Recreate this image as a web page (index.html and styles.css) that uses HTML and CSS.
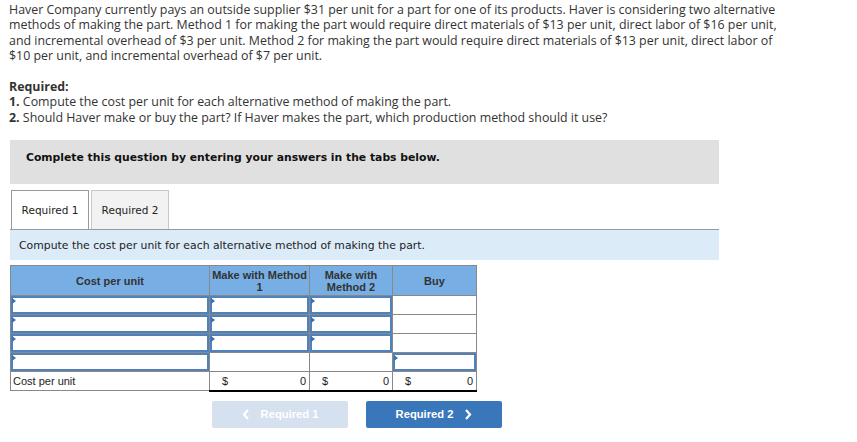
FILE: index.html
```html
<!DOCTYPE html>
<html>
<head>
<meta charset="utf-8">
<link rel="stylesheet" href="styles.css">
</head>
<body>
<div class="page">
  <p class="intro">Haver Company currently pays an outside supplier $31 per unit for a part for one of its products. Haver is considering two alternative<br>methods of making the part. Method 1 for making the part would require direct materials of $13 per unit, direct labor of $16 per unit,<br>and incremental overhead of $3 per unit. Method 2 for making the part would require direct materials of $13 per unit, direct labor of<br>$10 per unit, and incremental overhead of $7 per unit.</p>
  <div class="required">
    <div class="req-title">Required:</div>
    <div><b>1.</b> Compute the cost per unit for each alternative method of making the part.</div>
    <div><b>2.</b> Should Haver make or buy the part? If Haver makes the part, which production method should it use?</div>
  </div>
  <div class="banner">Complete this question by entering your answers in the tabs below.</div>
  <div class="tabs">
    <div class="tab active">Required 1</div>
    <div class="tab">Required 2</div>
  </div>
  <div class="instr">Compute the cost per unit for each alternative method of making the part.</div>
  <table class="grid">
    <colgroup><col class="c1"><col class="c2"><col class="c3"><col class="c4"></colgroup>
    <thead>
      <tr><th>Cost per unit</th><th class="top">Make with Method 1</th><th class="top">Make with Method 2</th><th>Buy</th></tr>
    </thead>
    <tbody>
      <tr><td class="in"><div class="box"></div></td><td class="in"><div class="box"></div></td><td class="in"><div class="box"></div></td><td></td></tr>
      <tr><td class="in"><div class="box"></div></td><td class="in"><div class="box"></div></td><td class="in"><div class="box"></div></td><td></td></tr>
      <tr><td class="in"><div class="box"></div></td><td class="in"><div class="box"></div></td><td class="in"><div class="box"></div></td><td></td></tr>
      <tr><td class="in"><div class="box"></div></td><td></td><td></td><td class="in"><div class="box"></div></td></tr>
      <tr class="total"><td class="label">Cost per unit</td><td class="amt"><span>$</span><span>0</span></td><td class="amt"><span>$</span><span>0</span></td><td class="amt"><span>$</span><span>0</span></td></tr>
    </tbody>
  </table>
  <div class="nav">
    <div class="btn prev"><svg class="chev" width="8" height="11" viewBox="0 0 8 11"><path d="M6 1 L2 5.5 L6 10" fill="none" stroke="#fff" stroke-width="2.2"/></svg><span>Required 1</span></div>
    <div class="btn next"><span>Required 2</span><svg class="chev" width="8" height="11" viewBox="0 0 8 11"><path d="M2 1 L6 5.5 L2 10" fill="none" stroke="#fff" stroke-width="2.2"/></svg></div>
  </div>
</div>
</body>
</html>
```
FILE: styles.css
```css
html, body { margin: 0; padding: 0; background: #fff; }
.page { padding: 2px 0 0 9px; width: 840px; }
.intro { margin: 0; white-space: nowrap; font-family: "Open Sans", sans-serif; font-size: 12.4px; line-height: 15.3px; color: #333; }
.required { margin-top: 16px; font-family: "Open Sans", sans-serif; font-size: 12.4px; line-height: 15.3px; color: #333; }
.req-title { font-weight: bold; }
.banner { margin: 15px 0 0 1px; width: 709px; height: 44px; box-sizing: border-box; background: #e0e0e0; padding: 11px 0 0 16px; font-family: "DejaVu Sans", sans-serif; font-weight: bold; font-size: 10.8px; color: #111; }
.tabs { display: flex; gap: 2px; margin: 6px 0 0 2px; }
.tab { width: 78px; height: 39px; box-sizing: border-box; border: 1px solid #c8c8c8; border-bottom: none; background: #f2f2f2; font-family: "DejaVu Sans", sans-serif; font-size: 10.5px; color: #222; display: flex; align-items: center; justify-content: center; }
.tab.active { background: #fff; border-color: #999; }
.instr { margin-left: 1px; width: 709px; height: 31px; box-sizing: border-box; border-top: 1px solid #999; background: #dcebf8; padding: 0 0 0 9px; display: flex; align-items: center; font-family: "DejaVu Sans", sans-serif; font-size: 10.85px; color: #222; }
.grid { margin: 5px 0 0 1px; border-collapse: collapse; table-layout: fixed; width: 466px; font-family: "Liberation Sans", Arial, sans-serif; font-size: 11px; color: #222; }
.c1 { width: 199px; } .c2 { width: 100px; } .c3 { width: 83px; } .c4 { width: 84px; }
.grid thead tr { height: 30px; }
.grid th { background: #77aee4; border: 1px solid #888; padding: 0; font-weight: bold; color: #333; text-align: center; vertical-align: middle; line-height: 12px; }
.grid th.top { vertical-align: top; padding-top: 3px; }
.grid tbody tr { height: 19px; }
.grid td { border: 1px solid #888; padding: 0; line-height: 14px; }
.box { position: relative; height: 18px; box-sizing: border-box; border: 2px solid #4f81bd; }
.box::before { content: ""; position: absolute; left: -1px; top: 0; border-left: 4px solid #3a6fb5; border-top: 3px solid transparent; border-bottom: 3px solid transparent; }
.total td.label { padding-left: 2px; }
.total td.amt { border-top: 1px solid #000; border-bottom: 2px solid #000; padding: 0 3px 0 12px; text-align: right; }
.amt span:first-child { float: left; }
.nav { display: flex; gap: 18px; margin: 9px 0 0 203px; }
.btn { width: 136px; height: 27px; border-radius: 2px; display: flex; align-items: center; justify-content: center; gap: 11px; font-family: "Liberation Sans", Arial, sans-serif; font-weight: bold; font-size: 11.2px; color: #fff; }
.btn.prev { background: #d6e1ef; }
.btn.next { background: #3a76ba; }
.chev { display: block; }
```
